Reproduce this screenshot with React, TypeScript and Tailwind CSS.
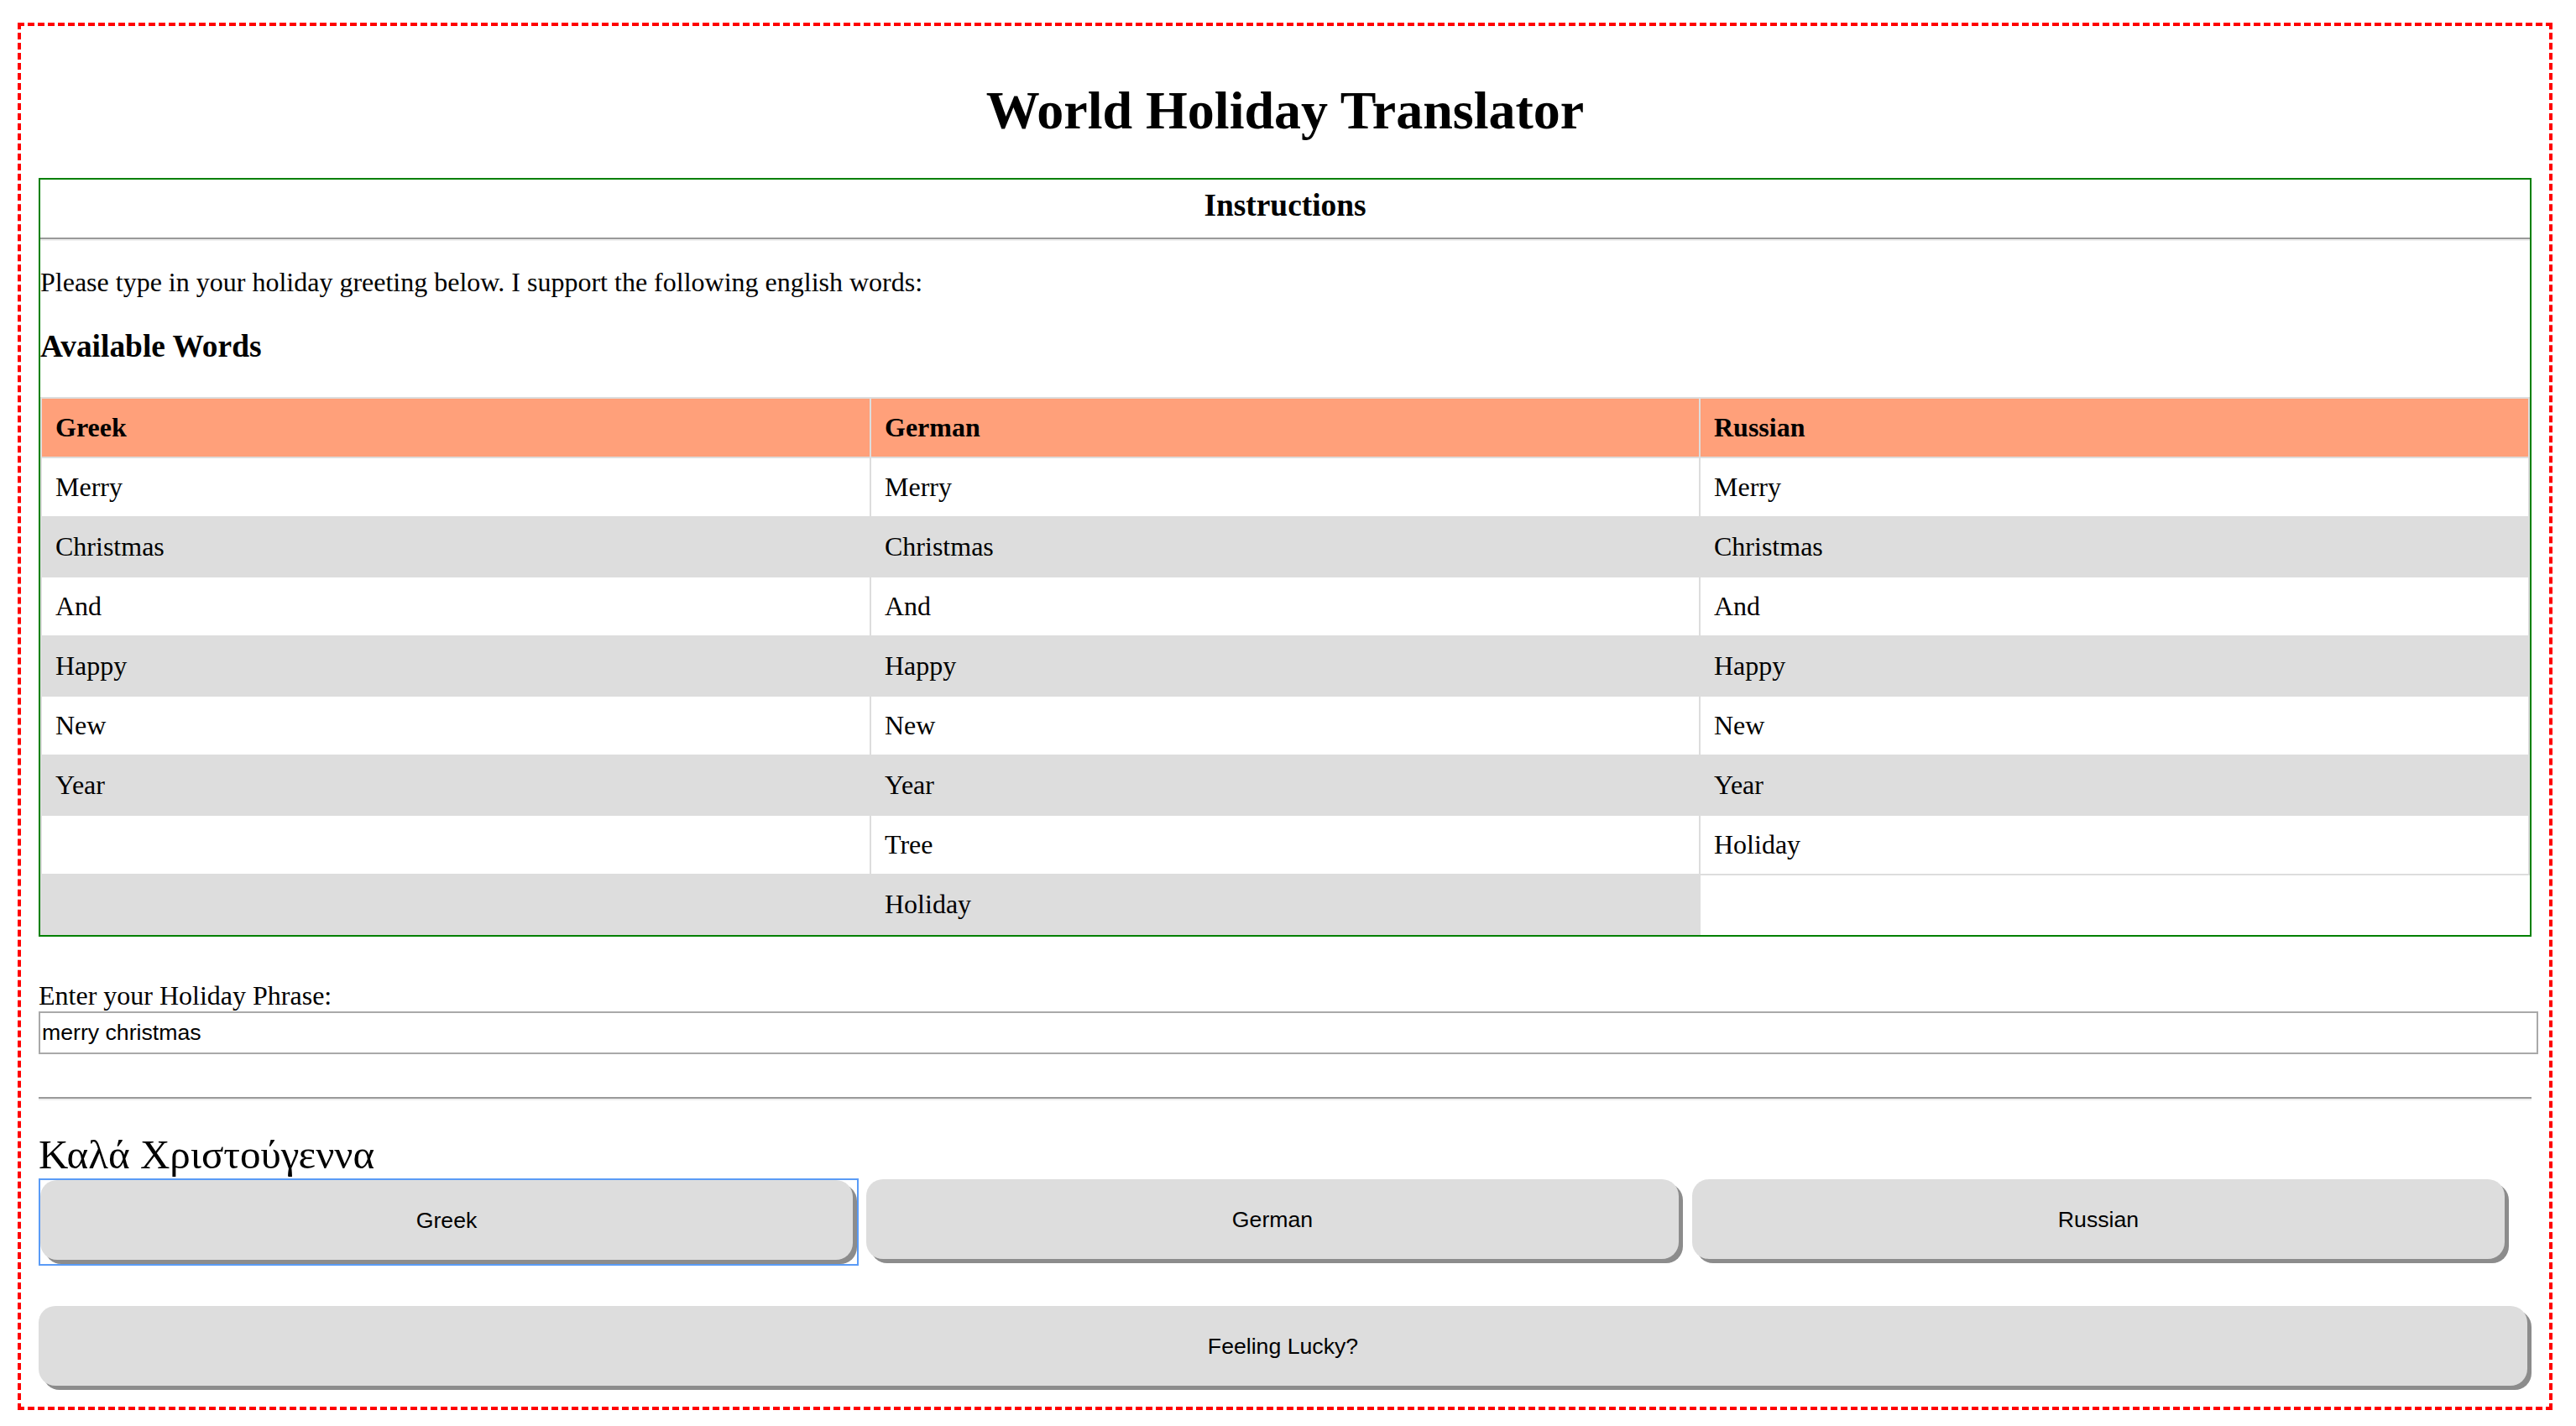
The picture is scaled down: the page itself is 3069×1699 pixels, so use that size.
import React, { useState } from "react";

const words: string[][] = [
  ["Merry", "Merry", "Merry"],
  ["Christmas", "Christmas", "Christmas"],
  ["And", "And", "And"],
  ["Happy", "Happy", "Happy"],
  ["New", "New", "New"],
  ["Year", "Year", "Year"],
  ["", "Tree", "Holiday"],
  ["", "Holiday"],
];

const translations: Record<string, string> = {
  Greek: "Καλά Χριστούγεννα",
  German: "Frohe Weihnachten",
  Russian: "С Рождеством",
};

const App = () => {
  const [phrase, setPhrase] = useState("merry christmas");
  const [language, setLanguage] = useState("Greek");

  const btn =
    "h-[95px] rounded-[20px] bg-[#dddddd] shadow-[5px_5px_0_#8c8c8c] text-[26.67px] text-black font-['Liberation_Sans',Arial,sans-serif] cursor-pointer";

  return (
    <div className="bg-white min-h-screen pt-[27px] font-['Liberation_Serif','Times_New_Roman',serif] text-black">
      <div className="ml-[21px] w-[3020px] border-4 border-dashed border-[#ff0000] pt-[65px] px-[21px] pb-[25px]">
        <h1 className="text-center text-[64px] leading-[72px] font-bold">World Holiday Translator</h1>

        {/* Instructions box */}
        <div className="mt-[44px] border-2 border-[#008000] pt-[10px]">
          <h3 className="text-center text-[37.4px] leading-[42px] font-bold">Instructions</h3>
          <div className="mt-[17px] h-0 border-t-2 border-b-2 border-t-[#9a9a9a] border-b-[#eeeeee]" />
          <p className="mt-[31px] text-[32px] leading-[36px]">
            Please type in your holiday greeting below. I support the following english words:
          </p>
          <h3 className="mt-[38px] text-[37.4px] leading-[42px] font-bold">Available Words</h3>
          <table className="mt-[39px] w-full table-fixed border-collapse text-[32px] leading-[37px]">
            <thead>
              <tr>
                {["Greek", "German", "Russian"].map((h) => (
                  <th key={h} className="border-2 border-[#dddddd] bg-[#ffa07a] px-[16px] py-[16px] text-left font-bold">
                    {h}
                  </th>
                ))}
              </tr>
            </thead>
            <tbody>
              {words.map((row, i) => (
                <tr key={i}>
                  {row.map((w, j) => (
                    <td
                      key={j}
                      className={`border-2 border-[#dddddd] px-[16px] py-[16px] ${i % 2 === 1 ? "bg-[#dddddd]" : "bg-white"}`}
                    >
                      {w}
                    </td>
                  ))}
                </tr>
              ))}
            </tbody>
          </table>
        </div>

        <label className="block mt-[52px] text-[32px] leading-[36px]">Enter your Holiday Phrase:</label>
        <input
          value={phrase}
          onChange={(e) => setPhrase(e.target.value)}
          className="block mt-[1px] w-[calc(100%+8px)] h-[51px] border-2 border-[#a9a9a9] px-[2px] text-[26.67px] font-['Liberation_Sans',Arial,sans-serif] outline-none"
        />

        <div className="mt-[51px] h-0 border-t-2 border-b-2 border-t-[#9a9a9a] border-b-[#eeeeee]" />

        <div className="mt-[38px] text-[49px] leading-[54px]">{translations[language]}</div>

        <div className="mt-[1px] flex items-start">
          <div className="w-[977px] border-2 border-[#5a9bf6] pr-[5px] pb-[5px]">
            <button className={`${btn} w-full h-[94px]`} onClick={() => setLanguage("Greek")}>
              Greek
            </button>
          </div>
          <button className={`${btn} mt-[1px] ml-[9px] w-[968px]`} onClick={() => setLanguage("German")}>
            German
          </button>
          <button className={`${btn} mt-[1px] ml-[16px] w-[968px]`} onClick={() => setLanguage("Russian")}>
            Russian
          </button>
        </div>

        <button className={`${btn} block mt-[48px] w-[calc(100%-5px)] h-[94px]`}>Feeling Lucky?</button>
      </div>
    </div>
  );
};

export default App;
